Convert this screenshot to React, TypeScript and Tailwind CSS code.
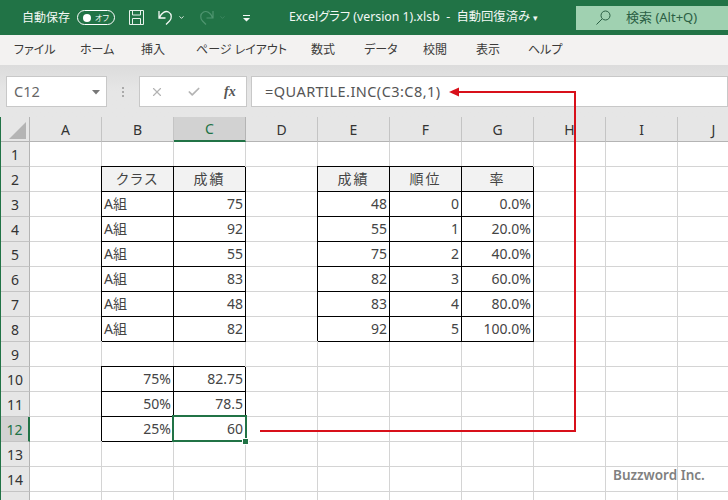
import { Check, ChevronDown, X } from "lucide-react";

const FONT = '"Noto Sans", "Noto Sans CJK JP", sans-serif';
const tabs = [
  { label: "ファイル", width: "w-[66px]" },
  { label: "ホーム", width: "w-[61px]" },
  { label: "挿入", width: "w-[55px]" },
  { label: "ページ レイアウト", width: "w-[115px]" },
  { label: "数式", width: "w-[53px]" },
  { label: "データ", width: "w-[59px]" },
  { label: "校閲", width: "w-[53px]" },
  { label: "表示", width: "w-[52px]" },
  { label: "ヘルプ", width: "w-[50px]" },
];
const columns = ["A", "B", "C", "D", "E", "F", "G", "H", "I", "J"];
const rows = Array.from({ length: 15 }, (_, i) => i + 1);

type Cell = { text: string; head?: boolean; left?: boolean };

const cells: Record<string, Cell> = {
  B2: { text: "クラス", head: true },
  C2: { text: "成績", head: true },
  E2: { text: "成績", head: true },
  F2: { text: "順位", head: true },
  G2: { text: "率", head: true },
  B3: { text: "A組", left: true },
  B4: { text: "A組", left: true },
  B5: { text: "A組", left: true },
  B6: { text: "A組", left: true },
  B7: { text: "A組", left: true },
  B8: { text: "A組", left: true },
  C3: { text: "75" },
  C4: { text: "92" },
  C5: { text: "55" },
  C6: { text: "83" },
  C7: { text: "48" },
  C8: { text: "82" },
  E3: { text: "48" },
  E4: { text: "55" },
  E5: { text: "75" },
  E6: { text: "82" },
  E7: { text: "83" },
  E8: { text: "92" },
  F3: { text: "0" },
  F4: { text: "1" },
  F5: { text: "2" },
  F6: { text: "3" },
  F7: { text: "4" },
  F8: { text: "5" },
  G3: { text: "0.0%" },
  G4: { text: "20.0%" },
  G5: { text: "40.0%" },
  G6: { text: "60.0%" },
  G7: { text: "80.0%" },
  G8: { text: "100.0%" },
  B10: { text: "75%" },
  B11: { text: "50%" },
  B12: { text: "25%" },
  C10: { text: "82.75" },
  C11: { text: "78.5" },
  C12: { text: "60" },
};

function TitleBar() {
  return (
    <div className="flex h-[35px] shrink-0 items-center bg-[#217346] text-[13px] text-[#f3f8f5]">
      <span className="ml-[22px] w-[55px] text-[12px]">自動保存</span>
      <div className="flex h-[15px] w-[38px] items-center justify-between rounded-full border border-white pl-[5px] pr-[5px]">
        <span className="size-[8px] rounded-full bg-white" />
        <span className="text-[8px] leading-none">オフ</span>
      </div>
      <svg className="ml-[13px] size-[17px]" viewBox="0 0 17 17" fill="none" stroke="#e8f2ec" strokeWidth="1">
        <path d="M1.5 1.5h14v14h-14z" />
        <path d="M4.5 1.5v4.500h8v-4.500M4.500 15.500v-6h8v6" />
      </svg>
      <svg className="ml-[12px] size-[17px]" viewBox="0 0 17 17" fill="none" stroke="#f3f8f5" strokeWidth="1.300">
        <path d="M2 2v7h6.500M2.500 8.500c2-5 6-7 9-5.500 3.500 2 3.500 6.500 1 9L9 15.500" />
      </svg>
      <ChevronDown className="ml-[4px] size-[7px]" strokeWidth={3} />
      <svg className="ml-[13px] size-[17px]" viewBox="0 0 17 17" fill="none" stroke="#4f9570" strokeWidth="1.200">
        <path d="M15 2v7H8.500M14.500 8.500c-2-5-6-7-9-5.500-3.500 2-3.500 6.500-1 9L8 15.500" />
      </svg>
      <ChevronDown className="ml-[4px] size-[7px] text-[#4f9570]" strokeWidth={2} />
      <svg className="ml-[17px] size-[8px]" viewBox="0 0 8 8" fill="#f3f8f5">
        <path d="M0 1h7v1H0zM0 4h7L3.500 7.500z" />
      </svg>
      <span className="ml-[38px] w-[287px] whitespace-pre text-[12.300px]">
        Excelグラフ (version 1).xlsb  -  自動回復済み <span className="text-[9px]">▾</span>
      </span>
      <div className="flex h-[24px] flex-1 items-center bg-[#a0d1b1] text-[#2b5f44]">
        <svg className="ml-[20px] size-[15px]" viewBox="0 0 15 15" fill="none" stroke="#2b5f44" strokeWidth="1">
          <circle cx="9.500" cy="5.500" r="4.500" />
          <path d="M6 9l-5.500 5.500" />
        </svg>
        <span className="ml-[15px] text-[13px]">検索 (Alt+Q)</span>
      </div>
    </div>
  );
}

function RibbonTabs() {
  return (
    <div className="flex h-[30px] shrink-0 items-center bg-[#f3f2f1] pl-[14px] text-[12px] text-[#3b3a39]">
      {tabs.map((tab) => (
        <span key={tab.label} className={`whitespace-pre ${tab.width}`}>
          {tab.label}
        </span>
      ))}
    </div>
  );
}

function FormulaBar() {
  return (
    <div className="flex h-[52px] shrink-0 bg-gradient-to-b from-[#dcdcdc] via-[#e6e6e6] to-[#e6e6e6] pb-[10px] pl-[6px] pt-[11px]">
      <div className="flex w-[101px] items-center justify-between border border-[#c8c8c8] bg-white pl-[7px] pr-[6px] text-[14.500px] text-[#666]">
        C12
        <svg className="size-[8px]" viewBox="0 0 8 8" fill="#777">
          <path d="M0 2h8L4 6.500z" />
        </svg>
      </div>
      <div className="flex w-[32px] flex-col items-center justify-center gap-[2px]">
        <span className="size-[2px] bg-[#aaa]" />
        <span className="size-[2px] bg-[#aaa]" />
        <span className="size-[2px] bg-[#aaa]" />
      </div>
      <div className="flex w-[108px] items-center border border-[#c8c8c8] bg-white">
        <X className="ml-[10px] size-[14px] text-[#b4b4b4]" strokeWidth={2} />
        <Check className="ml-[23px] size-[14px] text-[#b4b4b4]" strokeWidth={3} />
        <span className="ml-[23px] font-['Liberation_Serif',serif] text-[14px] font-bold italic text-[#555]">fx</span>
      </div>
      <div className="ml-[4px] flex flex-1 items-center border border-[#c8c8c8] bg-white pl-[13px] text-[14.500px] tracking-[0.45px] text-[#555]">
        =QUARTILE.INC(C3:C8,1)
      </div>
    </div>
  );
}

function SheetCell({ id }: { id: string }) {
  const cell = cells[id];
  if (!cell) {
    return <div className="border-b border-r border-[#d4d4d4] bg-white" />;
  }
  const align = cell.head ? "justify-center" : cell.left ? "justify-start pl-[2px]" : "justify-end pr-[2px]";
  return (
    <div
      className={`relative z-10 flex items-center border-b border-r border-black text-[14px] leading-none text-[#444] shadow-[-1px_-1px_0_#000] ${align} ${
        cell.head ? "bg-[#f2f2f2] tracking-[2px]" : "bg-white"
      }`}
    >
      {cell.text}
      {id === "C12" && (
        <>
          <span className="absolute -left-[2px] -top-[2px] h-[27px] w-[75px] border-2 border-[#217346]" />
          <span className="absolute -bottom-[3px] -right-[3px] size-[5px] bg-[#217346] outline outline-1 outline-white" />
        </>
      )}
    </div>
  );
}

function Sheet() {
  return (
    <div className="grid shrink-0 grid-cols-[29px_repeat(10,72px)] grid-rows-[25px_repeat(15,25px)] border-l border-[#217346]">
      <div className="relative border-b border-r border-[#b4b4b4] bg-[#e6e6e6]">
        <svg className="absolute bottom-[2px] right-[3px] size-[17px]" viewBox="0 0 17 17" fill="#b4b4b4">
          <path d="M17 0v17H0z" />
        </svg>
      </div>
      {columns.map((col) => (
        <div
          key={col}
          className={`flex items-center justify-center border-r text-[14px] ${
            col === "C"
              ? "border-b-2 border-b-[#217346] border-r-[#b4b4b4] bg-[#d2d2d2] text-[#217346]"
              : "border-b border-b-[#b4b4b4] border-r-[#c4c4c4] bg-[#e6e6e6] text-[#333]"
          }`}
        >
          {col}
        </div>
      ))}
      {rows.map((row) => (
        <div key={row} className="contents">
          <div
            className={`flex items-center justify-center border-b border-b-[#c4c4c4] text-[14px] ${
              row === 12
                ? "border-r-2 border-r-[#217346] bg-[#d2d2d2] text-[#217346]"
                : "border-r border-r-[#b4b4b4] bg-[#e6e6e6] text-[#333]"
            }`}
          >
            {row}
          </div>
          {columns.map((col) => (
            <SheetCell key={col} id={`${col}${row}`} />
          ))}
        </div>
      ))}
    </div>
  );
}

export default function App() {
  return (
    <div
      className="relative flex h-[500px] w-[728px] flex-col overflow-hidden bg-white [font-feature-settings:'palt']"
      style={{ fontFamily: FONT }}
    >
      <TitleBar />
      <RibbonTabs />
      <FormulaBar />
      <Sheet />
      {/* red callout from C12 up to the formula */}
      <svg className="pointer-events-none absolute left-0 top-0 z-20 h-[500px] w-[728px]" viewBox="0 0 728 500" fill="none">
        <path d="M260 431H575V92H456" stroke="#d8101a" strokeWidth="2" />
        <path d="M449 92l10-4.500v9z" fill="#d8101a" />
      </svg>
      <span className="absolute left-[613px] top-[465px] z-20 text-[13.500px] font-semibold text-[#808080]">Buzzword Inc.</span>
    </div>
  );
}
